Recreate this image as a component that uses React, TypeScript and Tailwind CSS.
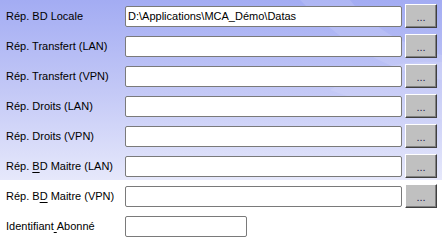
import React from "react";

type Row = {
  label: React.ReactNode;
  value?: string;
  button?: boolean;
  short?: boolean;
};

const ROWS: Row[] = [
  { label: "Rép. BD Locale", value: "D:\\Applications\\MCA_Démo\\Datas", button: true },
  { label: "Rép. Transfert (LAN)", button: true },
  { label: "Rép. Transfert (VPN)", button: true },
  { label: "Rép. Droits (LAN)", button: true },
  { label: "Rép. Droits (VPN)", button: true },
  {
    label: (
      <>
        Rép. <span className="underline underline-offset-2">B</span>D Maitre (LAN)
      </>
    ),
    button: true,
  },
  {
    label: (
      <>
        Rép. B<span className="underline underline-offset-2">D</span> Maitre (VPN)
      </>
    ),
    button: true,
  },
  {
    label: (
      <>
        Identifiant<span className="underline underline-offset-2">&nbsp;</span>Abonné
      </>
    ),
    short: true,
  },
];

export default function App() {
  return (
    <div className="relative w-[442px] h-[241px] overflow-hidden bg-white font-['Liberation_Sans',Arial,sans-serif] text-[11px] text-black">
      {/* gradient backdrop with faint waves */}
      <div className="absolute left-0 top-0 w-full h-[180px] bg-gradient-to-b from-[#a3acf3] via-[#c3c8f6] to-[#e6e8fb]" />
      <svg className="absolute left-0 top-0" width="442" height="180" viewBox="0 0 442 180">
        <path d="M300 0 C340 40 380 70 442 80 L442 55 C400 45 370 25 350 0 Z" fill="#ffffff" opacity="0.12" />
        <path d="M330 90 C360 70 400 60 442 62 L442 120 C410 110 370 105 330 90 Z" fill="#ffffff" opacity="0.1" />
      </svg>

      <div className="relative flex flex-col pt-[1px]">
        {ROWS.map((row, i) => (
          <div key={i} className="flex items-center h-[30px]">
            <div className="w-[125px] pl-[6px] whitespace-nowrap">{row.label}</div>
            <div
              className={
                (row.short ? "w-[122px]" : "w-[277px]") +
                " h-[21px] bg-white border border-[#7a7a7a] rounded-[2px] flex items-center pl-[2px]"
              }
            >
              {row.value}
            </div>
            {row.button && (
              <div className="ml-[3px] w-[32px] h-[24px] bg-[#c0c0c0] border border-t-white border-l-white border-b-[#404040] border-r-[#404040] shadow-[inset_-1px_-1px_0_#808080] flex items-center justify-center text-[#20204a] pt-[2px]">
                ...
              </div>
            )}
          </div>
        ))}
      </div>
    </div>
  );
}
